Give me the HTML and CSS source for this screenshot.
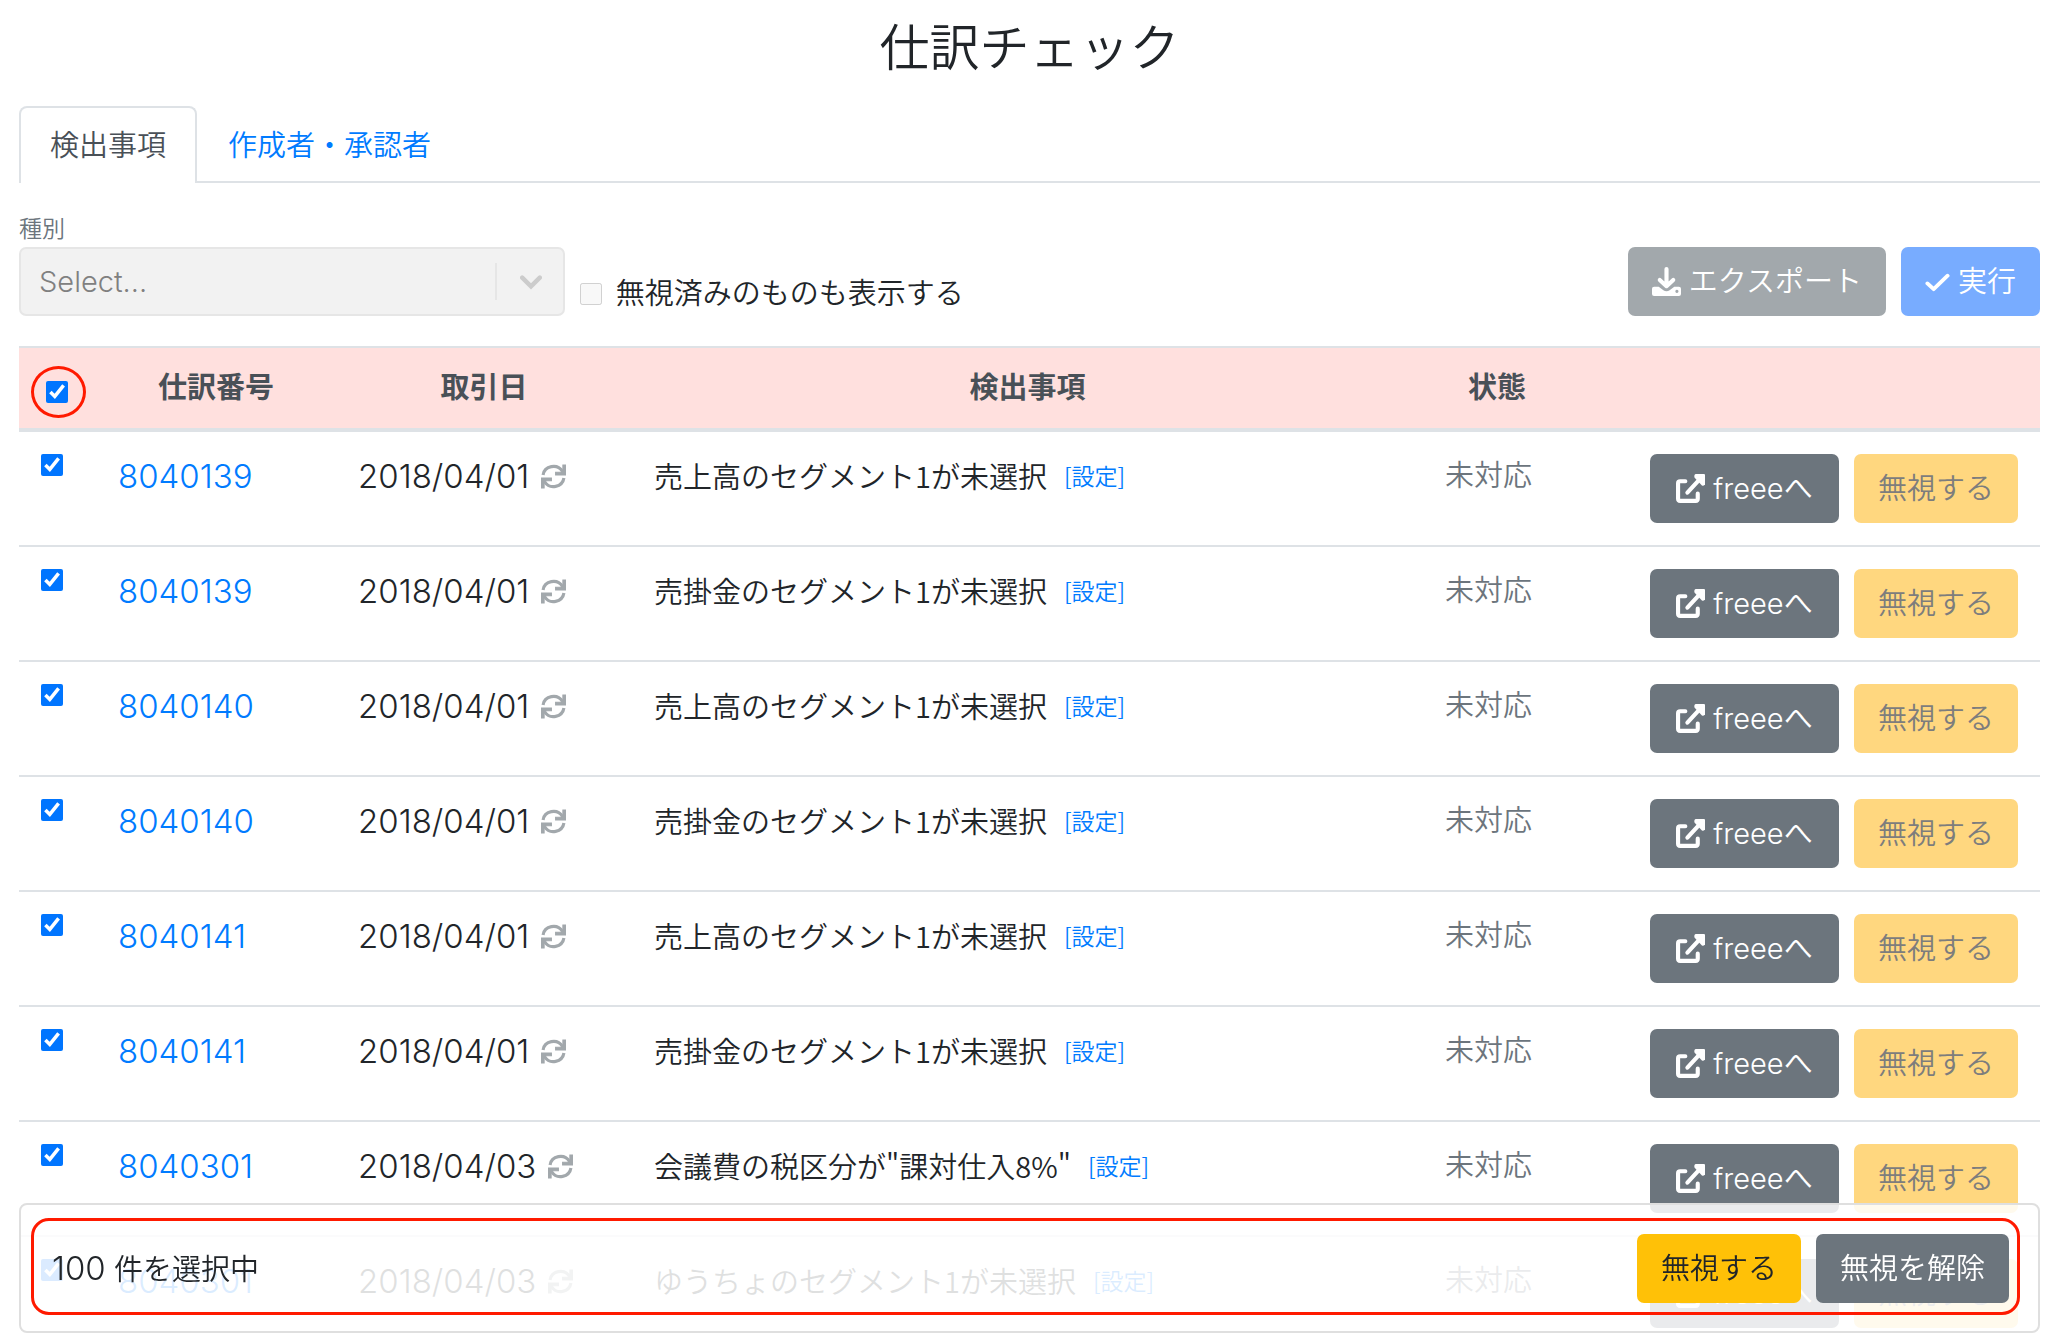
FILE: index.html
```html
<!DOCTYPE html>
<html lang="ja">
<head>
<meta charset="utf-8">
<title>仕訳チェック</title>
<link rel="stylesheet" href="styles.css">
</head>
<body>
<svg class="sprite" aria-hidden="true">
  <symbol id="download" viewBox="0 0 28 28"><path d="M14 2v14M7.500 12.500l6.500 6 6.500-6" fill="none" stroke="currentColor" stroke-width="4" stroke-linecap="round" stroke-linejoin="round"/><path fill-rule="evenodd" d="M2 19h4.500l4.500 3.500q3 2 6 0l4.500-3.500H26q2 0 2 2v5q0 2-2 2H2q-2 0-2-2v-5q0-2 2-2zM24 22a1.500 1.500 0 1 0 .1 0z" fill="currentColor"/></symbol>
  <symbol id="check" viewBox="0 0 26 28"><path d="M2.500 16l6.500 6L23.500 8" fill="none" stroke="currentColor" stroke-width="4" stroke-linecap="round" stroke-linejoin="round"/></symbol>
  <symbol id="external" viewBox="0 0 28 28"><path d="M9 7H4Q2 7 2 9v15q0 2 2 2h15q2 0 2-2v-5" fill="none" stroke="currentColor" stroke-width="4" stroke-linecap="round"/><path d="M11 18L23 5" stroke="currentColor" stroke-width="4" stroke-linecap="round"/><path d="M19 0h8q1 0 1 1v9q-1 2-3 1l-7-7.500q-1-2.500 1-3.500z" fill="currentColor"/></symbol>
  <symbol id="refresh" viewBox="0 0 24 24"><path d="M2 10.500a10 9.500 0 0 1 18.500-3.500M22 13.500a10 9.500 0 0 1-18.500 3.500" fill="none" stroke="currentColor" stroke-width="3"/><path d="M23.500 1v9.500H14v-2.500h5l2-2V1zM.5 23v-9.500H10v2.500H5l-2 2v5z" fill="currentColor" stroke="currentColor" stroke-width="1"/></symbol>
  <symbol id="chevron" viewBox="0 0 20 20"><path d="M2 6l8 8 8-8" fill="none" stroke="currentColor" stroke-width="4" stroke-linecap="round"/></symbol>
</svg>
<main class="page">
  <h1 class="title">仕訳チェック</h1>
  <nav class="tabs">
    <a class="tab tab-active" href="#issues">検出事項</a>
    <a class="tab" href="#authors">作成者・承認者</a>
  </nav>
  <section class="toolbar">
    <div class="field">
      <label class="field-label" for="kind">種別</label>
      <div class="select-box">
        <select class="select" id="kind" disabled><option>Select...</option></select>
        <span class="select-arrow"><svg class="chevron"><use href="#chevron"/></svg></span>
      </div>
    </div>
    <label class="toggle"><input class="box" type="checkbox" disabled>無視済みのものも表示する</label>
    <div class="actions">
      <button class="btn btn-gray" disabled><svg class="icon"><use href="#download"/></svg>エクスポート</button>
      <button class="btn btn-blue" disabled><svg class="icon icon-narrow"><use href="#check"/></svg>実行</button>
    </div>
  </section>
  <table class="list">
    <colgroup><col class="c-box"><col class="c-number"><col class="c-date"><col class="c-issue"><col class="c-state"><col class="c-actions"></colgroup>
    <thead>
      <tr><th class="head-box"><span class="ring"><input class="box" type="checkbox" checked aria-label="すべて選択"></span></th><th>仕訳番号</th><th>取引日</th><th>検出事項</th><th>状態</th><th></th></tr>
    </thead>
    <tbody id="rows"></tbody>
  </table>
</main>
<aside class="panel">
  <div class="panel-inner">
    <span><span class="figures">100</span> 件を選択中</span>
    <div class="actions">
      <button class="btn btn-amber">無視する</button>
      <button class="btn btn-gray">無視を解除</button>
    </div>
  </div>
</aside>
<script src="rows.js"></script>
</body>
</html>
```
FILE: styles.css
```css
* { box-sizing: border-box; }
body {
  margin: 0;
  background: #fff;
  color: #212529;
  font-family: Inter, "Noto Sans CJK JP", sans-serif;
  font-size: 29px;
  font-weight: 350;
  line-height: 44px;
}
a { color: #007bff; text-decoration: none; }
.sprite { display: none; }
.page { height: 100vh; overflow: hidden; padding: 18px 8px 0 19px; }
.title { margin: 0 0 28px; font-size: 50px; font-weight: 350; line-height: 60px; text-align: center; }
.tabs { display: flex; border-bottom: 2px solid #dee2e6; }
.tab { padding: 16px 29px 13px; border: 2px solid transparent; border-bottom: 0; }
.tab-active {
  margin-bottom: -2px;
  padding-bottom: 15px;
  border-color: #dee2e6;
  border-radius: 8px 8px 0 0;
  background: #fff;
  color: #495057;
}
.toolbar { display: flex; align-items: flex-end; margin-top: 29px; }
.field { width: 27%; }
.field-label { display: block; color: #6c757d; font-size: 23px; line-height: 35px; }
.select-box { display: grid; align-items: center; }
.select, .select-arrow { grid-area: 1 / 1; }
.select {
  width: 100%;
  height: 69px;
  padding: 0 18px;
  border: 2px solid #e6e6e6;
  border-radius: 7px;
  background: #f2f2f2;
  color: #808080;
  font: inherit;
  opacity: 1;
  appearance: none;
}
.select-arrow {
  justify-self: end;
  display: flex;
  align-items: center;
  height: 37px;
  padding: 0 23px;
  border-left: 2px solid #e6e6e6;
  color: #ccc;
  pointer-events: none;
}
.chevron { width: 22px; height: 22px; }
.toggle { display: flex; align-items: center; gap: 14px; margin-left: 15px; }
.box { width: 22px; height: 22px; margin: 0; }
.actions { display: flex; justify-content: flex-end; gap: 15px; margin-left: auto; }
.btn {
  display: flex;
  align-items: center;
  justify-content: center;
  gap: 8px;
  height: 69px;
  padding: 0 24px;
  border: 0;
  border-radius: 7px;
  color: #fff;
  font: inherit;
  white-space: nowrap;
}
.btn-gray { background: #6c757d; }
.btn-gray:disabled { background: #a2a8ac; }
.btn-blue { background: #007bff; }
.btn-blue:disabled { background: #78acff; }
.btn-amber { background: #ffc107; color: #212529; }
.btn-amber:disabled { background: #ffd77f; color: #7d7d7d; }
.btn-link { min-width: 189px; }
.icon { width: 29px; height: 29px; }
.icon-narrow { width: 25px; }
.figures { font-size: 33px; }
.list { width: 100%; margin-top: 30px; border-collapse: collapse; table-layout: fixed; }
.c-box { width: 77px; }
.c-number { width: 240px; }
.c-date { width: 296px; }
.c-state { width: 148px; }
.c-actions { width: 469px; }
.list th {
  height: 83px;
  padding: 0;
  border-top: 2px solid #dee2e6;
  border-bottom: 4px solid #dee2e6;
  background: #ffe0de;
  color: #495057;
  font-weight: 700;
}
.list td { height: 115px; padding: 22px; border-top: 2px solid #dee2e6; vertical-align: top; white-space: nowrap; }
.list .head-box { padding: 8px 0 0 12px; }
.ring {
  display: flex;
  align-items: center;
  justify-content: center;
  width: 55px;
  height: 52px;
  padding-right: 4px;
  border: 3px solid #ff1a00;
  border-radius: 50%;
}
td .box { display: block; }
.date, .issue { display: flex; align-items: center; gap: 12px; }
.issue { gap: 17px; font-family: "Noto Sans CJK JP", sans-serif; line-height: 42px; }
.issue a { font-size: 23px; }
.refresh { width: 25px; height: 25px; color: #a2a8ac; }
.state { color: #6c757d; }
.panel {
  position: fixed;
  right: 8px;
  bottom: 0;
  left: 19px;
  padding: 13px 18px 16px 10px;
  border: 2px solid #dfdfdf;
  border-radius: 8px;
  background: rgba(255, 255, 255, 0.86);
}
.panel-inner {
  display: flex;
  align-items: center;
  padding: 13px 8px 9px 18px;
  border: 3px solid #ff1a00;
  border-radius: 18px;
}
```
FILE: rows.js
```js
const entries = [
  ["8040139", "2018/04/01", "売上高のセグメント1が未選択"],
  ["8040139", "2018/04/01", "売掛金のセグメント1が未選択"],
  ["8040140", "2018/04/01", "売上高のセグメント1が未選択"],
  ["8040140", "2018/04/01", "売掛金のセグメント1が未選択"],
  ["8040141", "2018/04/01", "売上高のセグメント1が未選択"],
  ["8040141", "2018/04/01", "売掛金のセグメント1が未選択"],
  ["8040301", "2018/04/03", "会議費の税区分が\"課対仕入8%\""],
  ["8040301", "2018/04/03", "ゆうちょのセグメント1が未選択"]
];
document.getElementById("rows").innerHTML = entries.map(([number, date, issue]) => `
<tr>
  <td><input class="box" type="checkbox" checked aria-label="${number} を選択"></td>
  <td><a class="figures" href="#${number}">${number}</a></td>
  <td><div class="date figures">${date}<svg class="refresh"><use href="#refresh"/></svg></div></td>
  <td><div class="issue">${issue}<a href="#settings">[設定]</a></div></td>
  <td class="state">未対応</td>
  <td><div class="actions">
    <button class="btn btn-gray btn-link"><svg class="icon"><use href="#external"/></svg>freeeへ</button>
    <button class="btn btn-amber" disabled>無視する</button>
  </div></td>
</tr>`).join("");
```
